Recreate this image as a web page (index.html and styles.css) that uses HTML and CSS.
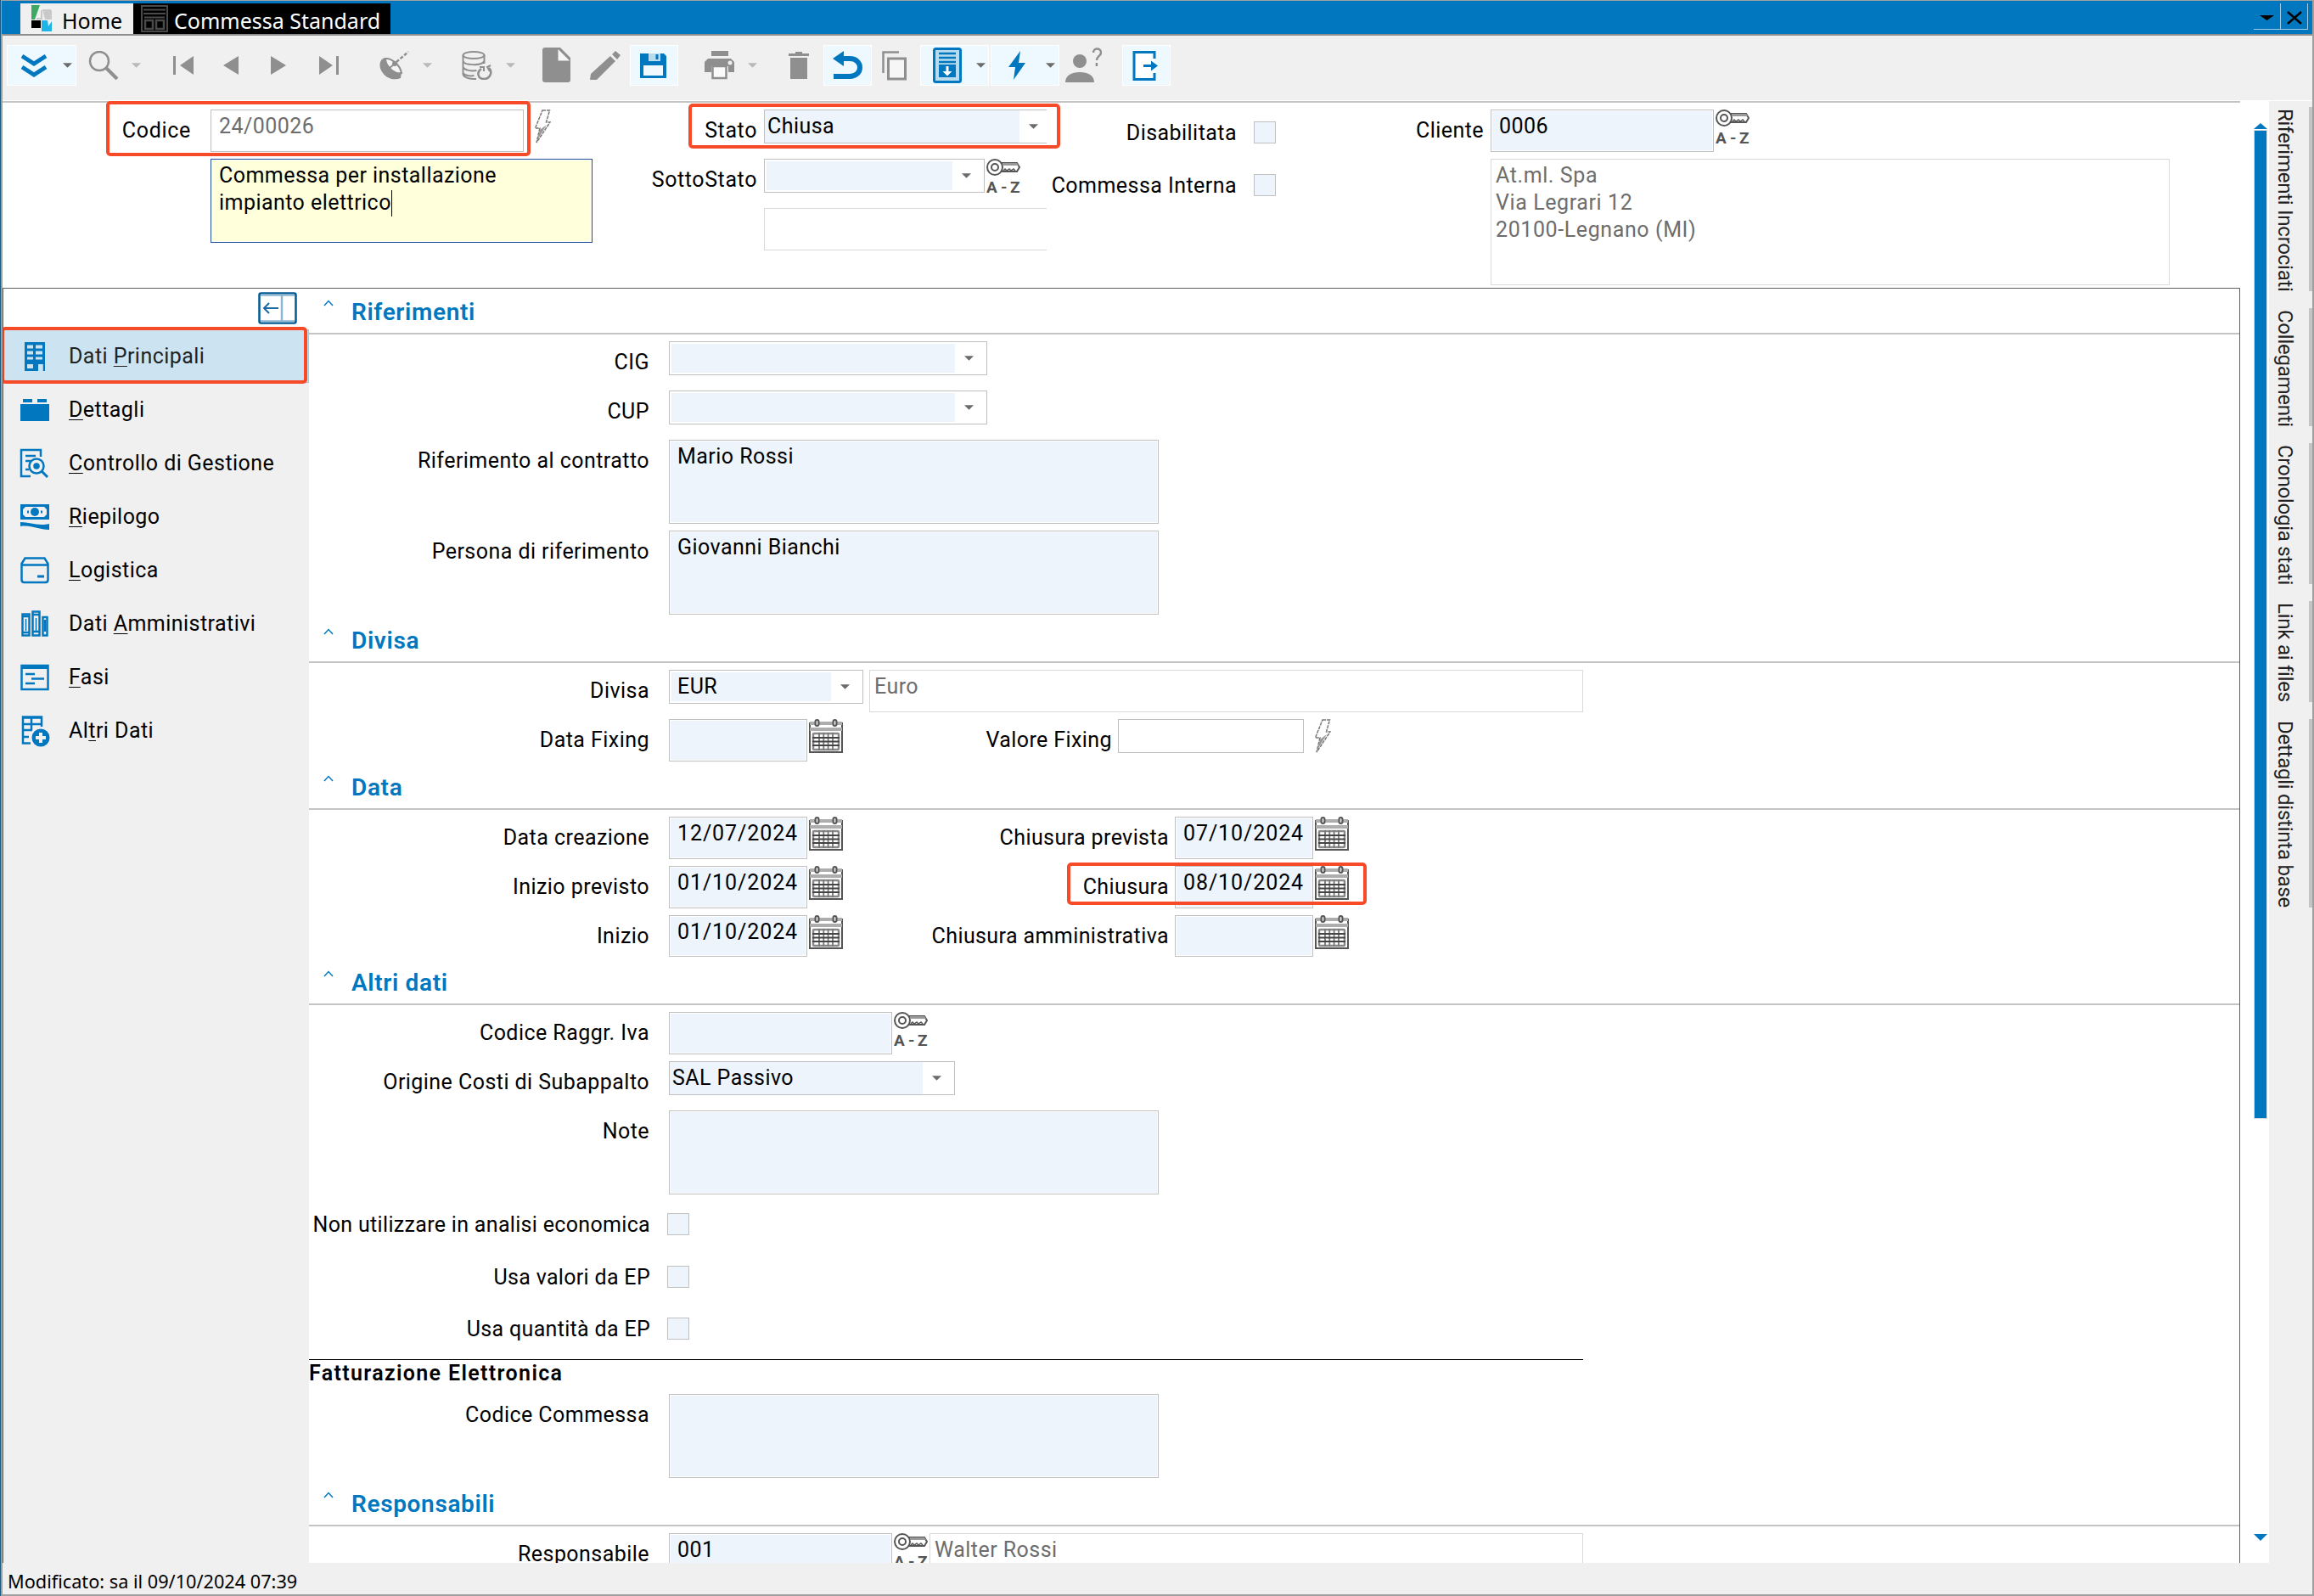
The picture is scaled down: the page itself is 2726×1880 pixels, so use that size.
FILE: index.html
```html
<!DOCTYPE html>
<html lang="it">
<head>
  <meta charset="UTF-8">
  <title>Commessa Standard</title>
  <link rel="stylesheet" href="styles.css">
</head>
<body>
  <!-- shared icons -->
  <svg width="0" height="0" class="defs">
    <symbol id="i-key" viewBox="0 0 40 40">
      <g fill="none" stroke="#555" stroke-width="2">
        <circle cx="10" cy="10" r="9"/>
        <circle cx="10" cy="10" r="4"/>
        <path d="M18 5h18l3 5-3 5H18"/>
      </g>
      <path d="M19 5h17l2 3H19z" fill="#999"/>
      <path d="M20 14l2-2 2 2 3-2 2 2 3-2 2 2" fill="none" stroke="#555" stroke-width="1.5"/>
      <text x="0 17 28" y="40" class="key-text">A-Z</text>
    </symbol>
    <symbol id="i-cal" viewBox="0 0 40 40">
      <path d="M1 4v35h38V4" fill="#fff" stroke="#555" stroke-width="2"/>
      <path d="M1 3h38v4H1zM1 10h38v4H1z" fill="#adadad"/>
      <rect x="7.500" y="1" width="4" height="7" rx="2" fill="#ddd" stroke="#555" stroke-width="2"/>
      <rect x="28.500" y="1" width="4" height="7" rx="2" fill="#ddd" stroke="#555" stroke-width="2"/>
      <rect x="5" y="17" width="30" height="19" rx="1" fill="#fff" stroke="#888" stroke-width="2.500"/>
      <path d="M12 16v21M17.300 16v21M22.600 16v21M28 16v21" stroke="#777" stroke-width="1.800"/>
      <path d="M4 22h32M4 26.500h32M4 31h32" stroke="#444" stroke-width="1.800"/>
    </symbol>
    <symbol id="i-flash" viewBox="0 0 20 40">
      <path d="M10 1h8.500l-4 14H19L3 39l4-17H1.500z" fill="#fff" stroke="#777" stroke-width="1.500" stroke-dasharray="4 1"/>
      <path d="M4 36l3-12 8-6z" fill="#999"/>
    </symbol>
    <symbol id="i-caret" viewBox="0 0 10 5"><path d="M0 0h10L5 5z" fill="currentColor"/></symbol>
    <symbol id="i-up" viewBox="0 0 12 8"><path d="M1 7l5-5.500L11 7" fill="none" stroke="#0077be" stroke-width="1.400"/></symbol>
  </svg>

  <div class="window">
    <header class="titlebar">
      <div class="tab tab-home">
        <svg width="24" height="31" viewBox="0 0 24 31">
          <path d="M0 0h10L4 17H0z" fill="#3fa863"/>
          <path d="M13 5h9q2 0 2 2v10H16z" fill="#c9c9c9"/>
          <path d="M0 18h11v9H0z" fill="#000"/>
          <path d="M12 18h7l1 7 4-6v12H12z" fill="#1fb4e8"/>
          <path d="M6 16h7M12 6v11" fill="none" stroke="#c9c9c9" stroke-width="2"/>
        </svg>
        <span>Home</span>
      </div>
      <div class="tab tab-active">
        <svg width="32" height="32" viewBox="0 0 32 32">
          <rect x="1" y="1" width="30" height="30" fill="#000" stroke="#4a4a4a" stroke-width="2"/>
          <path d="M3 5.500h26M3 10h26M4 14.500h24" stroke="#4a4a4a" stroke-width="2"/>
          <path d="M5 18h9v10H5zM18 18h9v10h-9z" fill="none" stroke="#4a4a4a" stroke-width="2.500"/>
        </svg>
        <span>Commessa Standard</span>
      </div>
      <div class="win-buttons">
        <div class="win-btn"><svg width="17" height="6" viewBox="0 0 17 6"><path d="M0 0h17L8.500 6z"/></svg></div>
        <div class="win-btn"><svg width="18" height="16" viewBox="0 0 18 16"><path d="M1 1l16 14M17 1L1 15" stroke="#000" stroke-width="2.500"/></svg></div>
      </div>
    </header>

    <nav class="toolbar">
      <div class="tool on" style="width:82px">
        <svg class="m16" width="30" height="28" viewBox="0 0 30 28" fill="none" stroke="#0077be" stroke-width="5"><path d="M1 3l14 9 14-9M1 16l14 9 14-9"/></svg>
        <svg class="caret m19"><use href="#i-caret"/></svg>
      </div>
      <div class="tool" style="width:104px">
        <svg class="m14" width="36" height="34" viewBox="0 0 36 34" fill="none" stroke="#8f8f8f"><ellipse cx="13" cy="12" rx="11" ry="11" stroke-width="2.500"/><path d="M21 20l13 13" stroke-width="4"/></svg>
        <svg class="caret off m15"><use href="#i-caret"/></svg>
      </div>
      <div class="tool" style="width:62px"><svg class="m10" width="24" height="24" viewBox="0 0 24 24" fill="#8f8f8f"><path d="M0 1h3v22H0zM24 1v22L8 12z"/></svg></div>
      <div class="tool" style="width:56px"><svg class="m7" width="18" height="24" viewBox="0 0 18 24" fill="#8f8f8f"><path d="M18 1v22L0 12z"/></svg></div>
      <div class="tool" style="width:56px"><svg class="m7" width="18" height="24" viewBox="0 0 18 24" fill="#8f8f8f"><path d="M0 1v22l18-11z"/></svg></div>
      <div class="tool" style="width:62px"><svg class="m8" width="23" height="24" viewBox="0 0 23 24" fill="#8f8f8f"><path d="M0 1v22l16-11zM20 1h3v22h-3z"/></svg></div>
      <div class="tool" style="width:98px">
        <svg class="m16" width="36" height="34" viewBox="0 0 36 34"><path d="M7 8C0 11 0 20 5 26c5 7 14 9 21 6l1-7z" fill="#8f8f8f"/><path d="M8 9c7-1 17 7 19 17-8 2-19-8-19-17z" fill="#f4f4f4" stroke="#8f8f8f" stroke-width="2"/><circle cx="19" cy="15" r="3" fill="#8f8f8f"/><path d="M13 20l6-5" stroke="#8f8f8f" stroke-width="2"/><path d="M21 13L35 1" stroke="#8f8f8f" stroke-width="2.500" stroke-dasharray="4 2"/></svg>
        <svg class="caret off m16"><use href="#i-caret"/></svg>
      </div>
      <div class="tool" style="width:99px">
        <svg class="m16" width="36" height="34" viewBox="0 0 36 34" fill="none" stroke="#8f8f8f" stroke-width="2"><ellipse cx="14" cy="5" rx="12.500" ry="4"/><path d="M1.500 5v22c0 3 5 6 12.500 6h3M26.500 5v10M1.500 12c1 5 22 6 25 0M1.500 19c2 4 10 5 16 4M1.500 26c2 3 8 4 13 3"/><path d="M23 21c-6 4-4 12 3 12s11-8 6-13" stroke-width="2.500"/><path d="M34 17l-4 2 3 5M21 19h5v5"/></svg>
        <svg class="caret off m16"><use href="#i-caret"/></svg>
      </div>
      <div class="tool" style="width:54px"><svg class="m12" width="33" height="42" viewBox="0 0 33 42"><path d="M3 0h18l12 12v26q0 3-3 3H3q-3 0-3-3V3q0-3 3-3z" fill="#8f8f8f"/><path d="M18.500 2v13.500H32z" fill="#f6f6f6"/></svg></div>
      <div class="tool" style="width:61px"><svg class="m14" width="36" height="35" viewBox="0 0 36 35" fill="#8f8f8f"><path d="M1 27L24 6l6 6L8 34H0zM26 4l4-4 6 5-4 5z"/></svg></div>
      <div class="tool on" style="width:57px"><svg class="m11" width="32" height="32" viewBox="0 0 32 32"><path d="M0 2h28l3 3v26H0z" fill="#0077be"/><path d="M10 2h14v9H10z" fill="#b9dbee"/><path d="M18.500 3h3v6h-3z" fill="#0077be"/><path d="M4 16h23v12H4z" fill="#eff9ff"/></svg></div>
      <div class="tool" style="width:113px">
        <svg class="m31" width="35" height="34" viewBox="0 0 35 34"><path d="M8 0h20v6H8zM4 9h27l4 4v12h-7v-7H8v7H0V13z" fill="#8f8f8f"/><path d="M9.500 18h16v14h-16z" fill="#fafafa" stroke="#8f8f8f" stroke-width="2.500"/><circle cx="30" cy="14" r="2.500" fill="#eee"/></svg>
        <svg class="caret off m16"><use href="#i-caret"/></svg>
      </div>
      <div class="tool" style="width:58px"><svg class="m17" width="24" height="33" viewBox="0 0 24 33"><path d="M2 7h20v25H2z" fill="#8f8f8f"/><path d="M0 2h24v3H0zM8 0h8v3H8z" fill="#8f8f8f"/></svg></div>
      <div class="tool on" style="width:57px"><svg class="m10" width="35" height="35" viewBox="0 0 35 35"><path d="M8 9h12c16 0 16 21 0 21H1" fill="none" stroke="#0077be" stroke-width="6"/><path d="M0 9L13 0v18z" fill="#0077be"/></svg></div>
      <div class="tool" style="width:57px"><svg class="m12" width="30" height="35" viewBox="0 0 30 35" fill="none" stroke="#8f8f8f"><path d="M20 1.500H1.500V26" stroke-width="2.500"/><path d="M7.500 9h20v24h-20z" fill="#f6f6f6" stroke-width="3"/></svg></div>
      <div class="tool on" style="width:81px">
        <svg class="m14" width="34" height="42" viewBox="0 0 34 42"><rect x="1.500" y="1.500" width="31" height="39" rx="2" fill="#b9dbee" stroke="#0077be" stroke-width="3"/><path d="M7 7h20M7 12h20M7 17h20" stroke="#0077be" stroke-width="2.500"/><path d="M7 20h20v15H7z" fill="#0077be"/><path d="M15.500 22h3v6h4L17 33.500 11.500 28h4z" fill="#fff"/></svg>
        <svg class="caret m17"><use href="#i-caret"/></svg>
      </div>
      <div class="tool on gap2" style="width:81px">
        <svg class="m20" width="20" height="34" viewBox="0 0 20 34"><path d="M14 0L0 19h8L6 34l14-20h-8z" fill="#0077be"/></svg>
        <svg class="caret m24"><use href="#i-caret"/></svg>
      </div>
      <div class="tool" style="width:74px">
        <svg class="m7" width="43" height="42" viewBox="0 0 43 42" fill="#8f8f8f"><ellipse cx="17" cy="16" rx="8" ry="8"/><path d="M0 41c0-8 7-12 17-12s17 4 17 12z"/><path d="M33 6c0-6 9-6 9 0 0 4-5 4-5 9M36.900 18v4" fill="none" stroke="#8f8f8f" stroke-width="2.500"/></svg>
      </div>
      <div class="tool on" style="width:57px"><svg class="m11" width="30" height="35" viewBox="0 0 30 35"><path d="M26 9V1.500H2v32h24V26" fill="#fff" stroke="#0077be" stroke-width="3"/><path d="M13 17.500h12" stroke="#0077be" stroke-width="3"/><path d="M22 11.500l8 6-8 6z" fill="#0077be"/></svg></div>
    </nav>

    <div class="workspace">
      <main class="sheet">
        <section class="head">
          <div class="head-col col-code">
            <div class="row"><label>Codice</label><div class="field readonly code">24/00026</div><svg class="ico-flash"><use href="#i-flash"/></svg></div>
            <div class="row"><label></label><div class="field editing">Commessa per installazione<br>impianto elettrico<span class="cursor"></span></div></div>
          </div>
          <div class="head-col col-state">
            <div class="row"><label>Stato</label><div class="select full stato"><span class="value">Chiusa</span><svg class="caret"><use href="#i-caret"/></svg></div></div>
            <div class="row"><label>SottoStato</label><div class="select sotto"><span class="value"></span><svg class="caret"><use href="#i-caret"/></svg></div><svg class="ico"><use href="#i-key"/></svg></div>
            <div class="row"><label></label><div class="field desc state-desc"></div></div>
          </div>
          <div class="head-col col-flags">
            <div class="row"><label>Disabilitata</label><span class="check"></span></div>
            <div class="row"><label>Commessa Interna</label><span class="check"></span></div>
          </div>
          <div class="head-col col-client">
            <div class="row"><label>Cliente</label><div class="field client">0006</div><svg class="ico"><use href="#i-key"/></svg></div>
            <div class="row"><label></label><div class="field desc address">At.ml. Spa<br>Via Legrari 12<br>20100-Legnano (MI)</div></div>
          </div>
          <div class="mark mark-code"></div>
          <div class="mark mark-state"></div>
        </section>

        <div class="body">
          <aside class="sidebar">
            <div class="side-top">
              <svg width="46" height="38" viewBox="0 0 46 38"><rect x="1.500" y="1.500" width="43" height="35" rx="2" fill="#fff" stroke="#005a93" stroke-width="2.500"/><path d="M3 3.500h40M3 34.500h40M28 3v32" stroke="#8fb6d0" stroke-width="2.500"/><path d="M8 19h16M13 13l-6 6 6 6" fill="none" stroke="#1a6ba3" stroke-width="2"/></svg>
            </div>
            <ul class="menu">
              <li class="selected"><svg viewBox="0 0 36 36" class="mi"><path d="M6 1h24v34h-2.500v-8h-5v8H6z" fill="#0077be"/><path d="M9 4.500h7v4H9zM19 4.500h8v4h-8zM9 11.500h7v4H9zM19 11.500h8v4h-8zM9 18.500h7v3H9zM19 18.500h8v3h-8zM9 27h7v5H9zM22 27h5.500v8H22z" fill="#cce3f1"/></svg><span>Dati <u>P</u>rincipali</span></li>
              <li><svg viewBox="0 0 36 36" class="mi" fill="#0077be"><path d="M1 11h34v20H1zM4 5h11v4H4zM21 5h11v4H21z"/></svg><span><u>D</u>ettagli</span></li>
              <li><svg viewBox="0 0 36 36" class="mi" fill="none" stroke="#0077be" stroke-width="2.500"><path d="M25 10V2H2v31h11M7 9h12M7 15h6M7 25h4"/><circle cx="20" cy="21" r="8.500"/><circle cx="20" cy="21" r="2.500" fill="#0077be"/><path d="M26 27l7 7" stroke-width="3"/></svg><span><u>C</u>ontrollo di Gestione</span></li>
              <li><svg viewBox="0 0 36 36" class="mi"><path d="M1 3h34v18H1zM1 24c12 0 20 5 34 2v7C22 33 14 27 1 29z" fill="#0077be"/><path d="M7 6h22l3 3v6l-3 3H7l-3-3V9z" fill="#f0f0f0"/><circle cx="18" cy="12" r="5" fill="#0077be"/><path d="M9 10.500h2v3H9zM25 10.500h2v3h-2z" fill="#0077be"/></svg><span><u>R</u>iepilogo</span></li>
              <li><svg viewBox="0 0 36 36" class="mi" fill="none" stroke="#0077be" stroke-width="2.500"><path d="M2.500 10l4-6.500h23l4 6.500v19q0 3-3 3h-25q-3 0-3-3zM2 11.500h32"/><path d="M21 25h8" stroke-width="3"/></svg><span><u>L</u>ogistica</span></li>
              <li><svg viewBox="0 0 36 36" class="mi" fill="none" stroke="#0077be" stroke-width="2.500"><path d="M3.500 6.500h8v25h-8zM15.500 3.500h8v28h-8zM27.500 10h5v21.500h-5z"/><path d="M7.500 12v14M19.500 11v15" stroke-width="1.500"/><path d="M3 9h9M3 28h9M15 7h9M15 27h9M30 13v14" /></svg><span>Dati <u>A</u>mministrativi</span></li>
              <li><svg viewBox="0 0 36 36" class="mi" fill="none" stroke="#0077be" stroke-width="2.500"><path d="M2.500 4h31v28h-31z"/><path d="M2 6h32" stroke-width="4"/><path d="M7 14h11M14 19.500h15M7 25h11"/></svg><span><u>F</u>asi</span></li>
              <li><svg viewBox="0 0 36 38" class="mi tall" fill="none" stroke="#0077be" stroke-width="2.500"><path d="M26 14V2.500H4v31h9M4 3.500h22M4 11h22M4 18h11M4 26h7M14 3v15"/><circle cx="25" cy="27" r="10.500" fill="#0077be" stroke="none"/><path d="M25 21v12M19 27h12" stroke="#f0f0f0" stroke-width="4"/></svg><span>Al<u>t</u>ri Dati</span></li>
            </ul>
            <div class="mark mark-menu"></div>
          </aside>

          <div class="form">
            <h2 class="first"><svg class="up"><use href="#i-up"/></svg>Riferimenti</h2>
            <div class="row"><label>CIG</label><div class="select cig"><span class="value"></span><svg class="caret"><use href="#i-caret"/></svg></div></div>
            <div class="row"><label>CUP</label><div class="select cig"><span class="value"></span><svg class="caret"><use href="#i-caret"/></svg></div></div>
            <div class="row"><label>Riferimento al contratto</label><div class="field area">Mario Rossi</div></div>
            <div class="row"><label>Persona di riferimento</label><div class="field area">Giovanni Bianchi</div></div>

            <h2><svg class="up"><use href="#i-up"/></svg>Divisa</h2>
            <div class="row"><label>Divisa</label><div class="select divisa"><span class="value">EUR</span><svg class="caret"><use href="#i-caret"/></svg></div><div class="field desc euro">Euro</div></div>
            <div class="row"><label>Data Fixing</label><div class="field date"></div><svg class="ico"><use href="#i-cal"/></svg><label class="second fixing">Valore Fixing</label><div class="field rate"></div><svg class="ico-flash"><use href="#i-flash"/></svg></div>

            <h2><svg class="up"><use href="#i-up"/></svg>Data</h2>
            <div class="row"><label>Data creazione</label><div class="field date">12/07/2024</div><svg class="ico"><use href="#i-cal"/></svg><label class="second">Chiusura prevista</label><div class="field date">07/10/2024</div><svg class="ico"><use href="#i-cal"/></svg></div>
            <div class="row closing"><label>Inizio previsto</label><div class="field date">01/10/2024</div><svg class="ico"><use href="#i-cal"/></svg><label class="second">Chiusura</label><div class="field date">08/10/2024</div><svg class="ico"><use href="#i-cal"/></svg><div class="mark mark-closing"></div></div>
            <div class="row short"><label>Inizio</label><div class="field date">01/10/2024</div><svg class="ico"><use href="#i-cal"/></svg><label class="second">Chiusura amministrativa</label><div class="field date"></div><svg class="ico"><use href="#i-cal"/></svg></div>

            <h2><svg class="up"><use href="#i-up"/></svg>Altri dati</h2>
            <div class="row"><label>Codice Raggr. Iva</label><div class="field lookup"></div><svg class="ico"><use href="#i-key"/></svg></div>
            <div class="row"><label>Origine Costi di Subappalto</label><div class="select full origine"><span class="value">SAL Passivo</span><svg class="caret"><use href="#i-caret"/></svg></div></div>
            <div class="row"><label>Note</label><div class="field area"></div></div>
            <div class="row flag"><label>Non utilizzare in analisi economica</label><span class="check"></span></div>
            <div class="row flag tight"><label>Usa valori da EP</label><span class="check"></span></div>
            <div class="row flag last"><label>Usa quantità da EP</label><span class="check"></span></div>
            <h3>Fatturazione Elettronica</h3>
            <div class="row"><label>Codice Commessa</label><div class="field area"></div></div>

            <h2><svg class="up"><use href="#i-up"/></svg>Responsabili</h2>
            <div class="row"><label>Responsabile</label><div class="field lookup">001</div><svg class="ico"><use href="#i-key"/></svg><div class="field desc person">Walter Rossi</div></div>
          </div>
        </div>
      </main>

      <div class="scrollbar">
        <svg width="16" height="7" viewBox="0 0 16 7"><path d="M0 7l8-7 8 7z" fill="#0077be"/></svg>
        <div class="thumb"></div>
        <svg class="down" width="16" height="8" viewBox="0 0 16 8"><path d="M0 0h16L8 8z" fill="#0077be"/></svg>
      </div>

      <aside class="side-tabs">
        <div class="side-tab" style="height:217px">Riferimenti Incrociati</div>
        <div class="side-tab" style="height:139px">Collegamenti</div>
        <div class="side-tab" style="height:166px">Cronologia stati</div>
        <div class="side-tab" style="height:119px">Link ai files</div>
        <div class="side-tab" style="height:222px">Dettagli distinta base</div>
      </aside>
    </div>

    <footer class="status">Modificato: sa il 09/10/2024 07:39</footer>
  </div>
</body>
</html>
```
FILE: styles.css
```css
* {
  box-sizing: border-box;
}
body {
  margin: 0;
  width: 2726px;
  height: 1880px;
  overflow: hidden;
  font-family: Roboto, "Liberation Sans", sans-serif;
  font-size: 25px;
  line-height: 30px;
  letter-spacing: 0.45px;
  color: #000;
  background: #f0f0f0;
}
svg {
  display: block;
  flex: none;
}
.defs {
  position: absolute;
}
.window {
  display: flex;
  flex-direction: column;
  height: 1880px;
  padding: 1px 2px 2px 3px;
  background: linear-gradient(90deg, #1f5a80 1px, #a0a0a0 1px);
}

/* title bar */
.titlebar {
  display: flex;
  height: 39px;
  margin-left: -1px;
  padding: 3px 5px 0 22px;
  background: #0077be;
  font-family: "Noto Sans", "Open Sans", sans-serif;
  letter-spacing: 0;
}
.tab {
  display: flex;
  height: 36px;
  line-height: 36px;
}
.tab-home {
  width: 133px;
  padding: 2px 0 0 13px;
  gap: 12px;
  background: #f0f0f0;
}
.tab-active {
  width: 303px;
  padding: 2px 0 0 9px;
  gap: 7px;
  background: #000;
  color: #fff;
}
.win-buttons {
  display: flex;
  margin-left: auto;
}
.win-btn {
  display: flex;
  align-items: center;
  justify-content: center;
  width: 32px;
  height: 31px;
  padding-top: 4px;
  border-right: 1px solid #9fcbe6;
  border-bottom: 1px solid #9fcbe6;
}

/* toolbar */
.toolbar {
  display: flex;
  height: 79px;
  padding: 11px 0 0 5px;
  border-top: 2px solid #8f8f8f;
  background: #f0f0f0;
  border-bottom: 1px solid #fff;
}
.tool {
  display: flex;
  align-items: center;
  height: 48px;
}
.tool.on {
  background: #edf8ff;
  border: 1px solid #fff;
}
.caret {
  width: 11px;
  height: 6px;
  color: #6b6b6b;
}
.caret.off {
  color: #b9b9b9;
}
.gap2 { margin-left: 2px; }
.m7 { margin-left: 7px; }
.m8 { margin-left: 8px; }
.m10 { margin-left: 10px; }
.m11 { margin-left: 11px; }
.m12 { margin-left: 12px; }
.m14 { margin-left: 14px; }
.m15 { margin-left: 15px; }
.m16 { margin-left: 16px; }
.m17 { margin-left: 17px; }
.m19 { margin-left: 19px; }
.m20 { margin-left: 20px; }
.m24 { margin-left: 24px; }
.m31 { margin-left: 31px; }

.workspace {
  display: flex;
  height: 1722px;
  background: #fff;
}
.sheet {
  width: 2636px;
  border-top: 2px solid #c4c4c4;
}

/* fields */
.row {
  display: flex;
  align-items: flex-start;
}
label {
  flex: none;
  padding-top: 10px;
  text-align: right;
  white-space: nowrap;
}
.field {
  flex: none;
  height: 50px;
  padding: 4px 9px;
  border: 1px solid #c0c0c0;
  background: #edf4fc;
  box-shadow: inset 0 0 0 1px #fff;
  white-space: nowrap;
}
.field.readonly {
  background: #fff;
  color: #6d6d6d;
}
.field.desc {
  padding: 3px 5px;
  border-color: #d9d9d9;
  background: #fff;
  color: #6d6d6d;
  line-height: 32px;
}
.select {
  display: flex;
  flex: none;
  height: 40px;
  padding: 2px;
  border: 1px solid #c0c0c0;
  background: #fff;
}
.select .value {
  flex: 1;
  padding: 2px 0 0 7px;
  background: #edf4fc;
}
.select .caret {
  margin: 14px 13px 0 11px;
}
.select.full {
  padding: 0;
}
.select.full .value {
  padding: 4px 0 0 3px;
}
.select.full .caret {
  margin: 16px 15px 0 11px;
}
.check {
  width: 26px;
  height: 26px;
  border: 1px solid #c0c0c0;
  background: #edf4fc;
}
.ico {
  width: 40px;
  height: 40px;
  margin-left: 2px;
}
.ico-flash {
  width: 20px;
  height: 40px;
  margin-left: 12px;
}
.key-text {
  font: bold 19px Roboto, sans-serif;
  fill: #555;
}
.mark {
  position: absolute;
  border: 4px solid #f64a28;
  border-radius: 5px;
}

/* header panel */
.head {
  position: relative;
  display: flex;
  height: 218px;
}
.head-col {
  display: flex;
  flex-direction: column;
  gap: 8px;
  padding-top: 8px;
}
.head-col .row {
  min-height: 50px;
}
.col-code { width: 697px; }
.col-code label { width: 222px; margin-right: 23px; letter-spacing: 0.7px; }
.code { width: 369px; }
.editing {
  width: 450px;
  height: 99px;
  padding-top: 3px;
  border-color: #1f4e9c;
  background: #ffffdc;
  line-height: 32px;
}
.cursor {
  display: inline-block;
  width: 1px;
  height: 31px;
  background: #000;
  vertical-align: -8px;
}
.col-state { width: 533px; overflow: hidden; }
.col-state label { width: 192px; margin-right: 8px; letter-spacing: 0.6px; }
.stato { width: 333px; border-right: 0; }
.select.stato .caret { margin-right: 10px; }
.sotto { width: 260px; }
.state-desc { width: 333px; border-right: 0; box-shadow: none; }
.col-flags { width: 270px; gap: 12px; }
.col-flags label { width: 224px; margin-right: 20px; padding-top: 13px; }
.col-flags .check { margin-top: 14px; }
.col-client label { width: 245px; margin-right: 8px; }
.client { width: 263px; }
.address { width: 800px; height: 149px; letter-spacing: 0.6px; }
.mark-code { left: 122px; top: -2px; width: 500px; height: 65px; }
.mark-state { left: 808px; top: 1px; width: 438px; height: 53px; }

/* body panel */
.body {
  display: flex;
  height: 1502px;
  border: 1px solid #606060;
  border-bottom: 0;
  overflow: hidden;
}
.sidebar {
  position: relative;
  width: 360px;
  background: #f0f0f0;
}
.side-top {
  height: 48px;
  padding: 4px 14px 0 0;
  background: #fff;
}
.side-top svg {
  margin-left: auto;
}
.menu {
  margin: 0;
  padding: 0;
  list-style: none;
}
.menu li {
  display: flex;
  align-items: center;
  height: 63px;
  padding-left: 19px;
  gap: 22px;
}
.menu .selected {
  background: #cce3f1;
  border: 1px solid #c0c0c0;
  padding-left: 18px;
  color: #222;
}
.menu span {
  padding-top: 1px;
}
.menu u {
  text-decoration-thickness: 1px;
  text-underline-offset: 3px;
}
.mi {
  width: 36px;
  height: 36px;
}
.mi.tall {
  height: 38px;
}
.mark-menu {
  left: -3px;
  top: 45px;
  width: 361px;
  height: 67px;
}

.form {
  width: 2274px;
}
.form h2 {
  display: flex;
  height: 49px;
  margin: 0 0 8px;
  padding: 8px 0 0 17px;
  border-bottom: 2px solid #c4c4c4;
  color: #0077be;
  font-size: 28px;
  font-weight: 600;
  letter-spacing: 0.65px;
}
.form h2.first {
  margin-top: 5px;
}
.up {
  width: 12px;
  height: 8px;
  margin: 0 21px 0 0;
}
.form .row {
  min-height: 50px;
  margin-bottom: 8px;
}
.form label {
  width: 401px;
  margin-right: 23px;
}
.form label.second {
  width: 384px;
  margin-right: 7px;
  letter-spacing: 0.4px;
}
.form label.fixing {
  width: 317px;
}
.form .row.short {
  min-height: 49px;
}
.short .field {
  height: 49px;
}
.closing {
  position: relative;
}
.mark-closing {
  left: 893px;
  top: -4px;
  width: 353px;
  height: 50px;
}
.cig { width: 375px; }
.area { width: 577px; height: 99px; }
.divisa { width: 229px; }
.euro { width: 841px; margin-left: 7px; }
.date { width: 163px; letter-spacing: 0.9px; }
.rate { width: 219px; height: 40px; background: #fff; }
.lookup { width: 263px; }
.origine { width: 337px; }
.person { width: 770px; margin-left: 2px; }
.form .flag {
  min-height: 62px;
  margin: 0;
}
.form .flag.tight {
  min-height: 61px;
}
.form .flag.last {
  min-height: 63px;
}
.form .flag label {
  width: 402px;
  margin-right: 20px;
  padding-top: 13px;
  letter-spacing: 0.32px;
}
.flag .check {
  margin-top: 14px;
}
h3 {
  width: 1501px;
  height: 41px;
  margin: 0;
  padding-top: 1px;
  border-top: 1px solid #000;
  font-size: 25px;
  font-weight: 600;
  letter-spacing: 1.35px;
}

/* scrollbar and right tabs */
.scrollbar {
  display: flex;
  flex-direction: column;
  align-items: center;
  width: 34px;
  padding: 26px 2px 0 16px;
}
.thumb {
  width: 16px;
  height: 1165px;
  margin-top: 1px;
  background: #0077be;
  border: 1px solid #d0dbe2;
}
.down {
  margin-top: auto;
  margin-bottom: 26px;
}
.side-tabs {
  display: flex;
  flex-direction: column;
  gap: 20px;
  width: 51px;
  padding-top: 7px;
  background: #f0f0f0;
}
.side-tab {
  padding: 2px 9px 0 0;
  border-right: 4px solid #c4c4c4;
  writing-mode: vertical-rl;
  line-height: 38px;
  font-size: 24px;
  letter-spacing: -0.25px;
  white-space: nowrap;
  color: #222;
}

.status {
  height: 37px;
  padding-left: 6px;
  background: #f0f0f0;
  font-family: "Noto Sans", "Open Sans", sans-serif;
  font-size: 21.7px;
  line-height: 43px;
  letter-spacing: 0;
}
```
